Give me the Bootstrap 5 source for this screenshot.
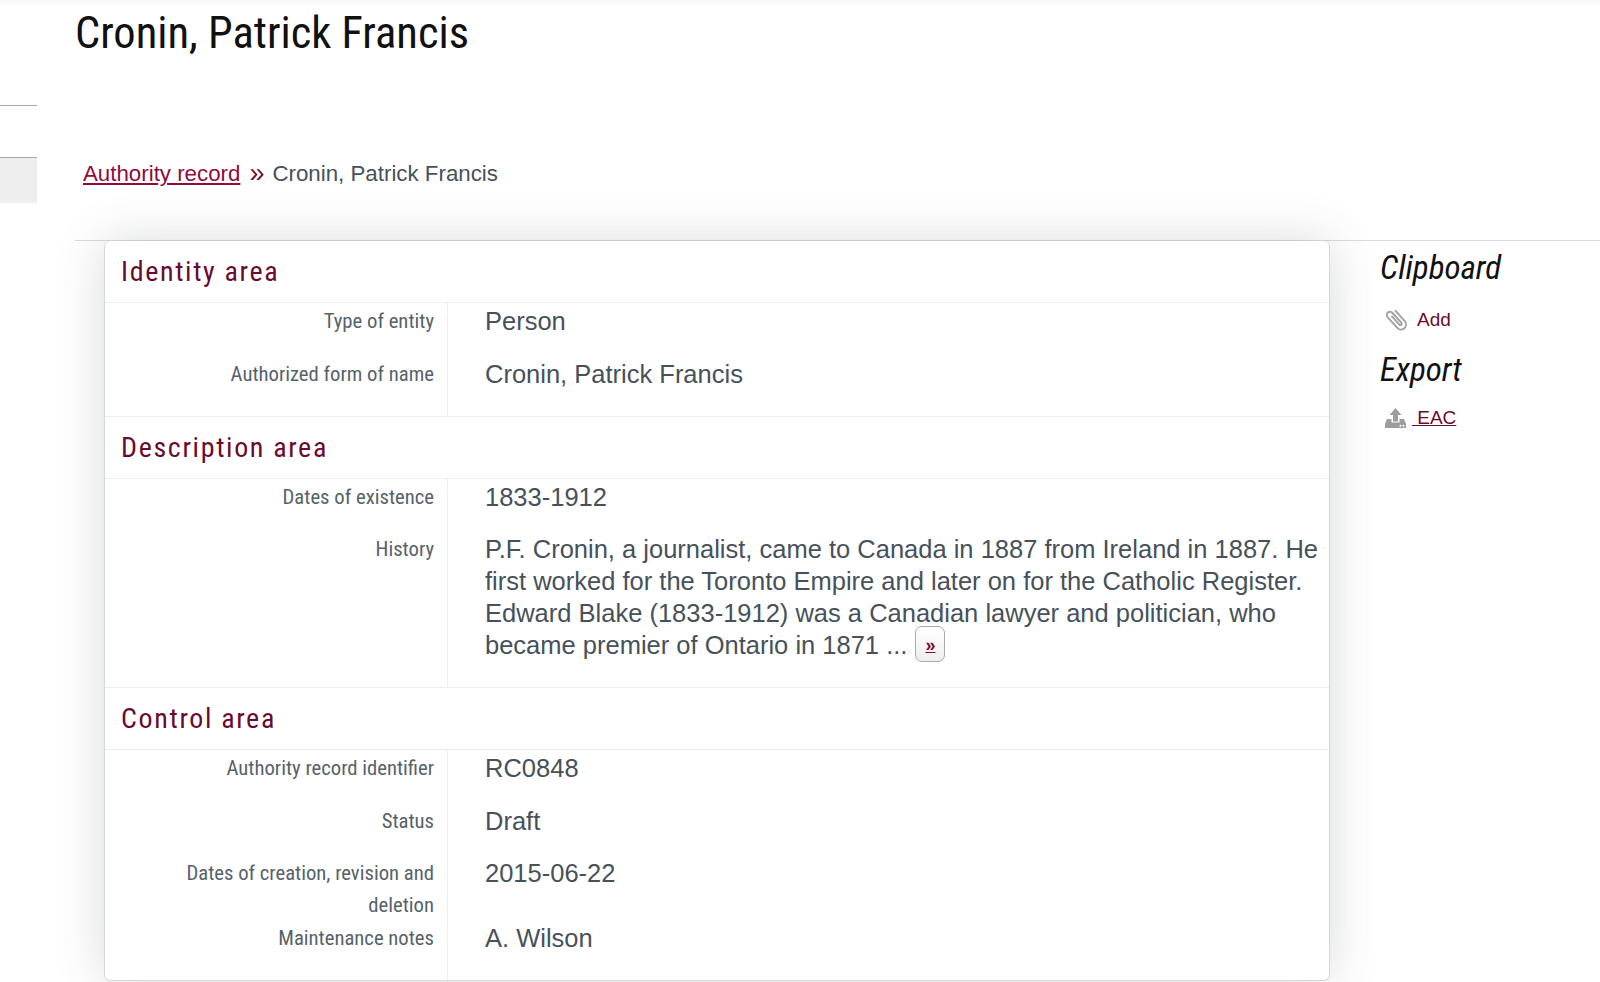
<!DOCTYPE html>
<html lang="en">
<head>
    <meta charset="UTF-8">
    <title>Cronin, Patrick Francis</title>
    <link href="https://cdn.jsdelivr.net/npm/bootstrap@5.3.0/dist/css/bootstrap.min.css" rel="stylesheet">
    <style>
        body {
            margin: 0;
            height: 982px;
            overflow: hidden;
            background: #fff;
            font-family: "Liberation Sans", Arial, sans-serif;
            color: #47515a;
        }

        .cond {
            font-family: "Liberation Sans Narrow", "Roboto", sans-serif;
            font-stretch: 75%;
        }

        .top-shade {
            height: 8px;
            margin-bottom: -8px;
            background: linear-gradient(#f7f7f7, #fff);
        }

        .side-stub { width: 37px; margin-right: 38px; flex: none; }
        .stub-line { height: 1px; background: #a9a9a9; margin-top: 105px; }
        .stub-block { height: 46px; margin-top: 51px; background: #eee; border-top: 1px solid #a9a9a9; }

        .main-wrap { flex: 1; min-width: 0; }

        .page-title {
            font-size: 44.5px;
            line-height: 48px;
            font-weight: 400;
            color: #111;
            margin: 9px 0 0;
        }

        .crumbs {
            margin: 101px 0 0 8px;
            font-size: 22.3px;
            line-height: 32px;
            height: 82px;
        }
        .crumbs a { color: #8f0b3b; }
        .crumb-sep { color: #6f0f33; margin: 0 8px 0 9px; font-size: 27px; line-height: 30px; }

        .body-row { border-top: 1px solid #d8dadc; }

        .record-box {
            width: 1226px;
            margin-left: 29px;
            height: 740px;
            flex: none;
            border: 1px solid #d5d7d9;
            border-top: 0;
            border-radius: 6px;
            box-shadow: 0 0 50px rgba(60, 70, 75, .2);
            background: #fff;
        }

        .area-head {
            height: 62px;
            margin: 0;
            padding: 1px 16px 0;
            display: flex;
            align-items: center;
            font-size: 28px;
            font-weight: 400;
            letter-spacing: 1.65px;
            color: #6b0a30;
            border-bottom: 1px solid #eceeef;
        }

        .field { display: flex; }
        .area-head + .field > div { padding-top: 2px; }
        .field-label {
            width: 342px;
            flex: none;
            padding: 0 13px 1px 70px;
            text-align: right;
            font-size: 20.7px;
            line-height: 32px;
            color: #56626a;
        }
        .field-value {
            flex: 1;
            border-left: 1px solid #eceeef;
            padding: 0 10px 20.6px 37px;
            font-size: 25.5px;
            line-height: 32px;
        }
        .field:last-child .field-value { padding-bottom: 26px; }
        .area-block { border-bottom: 1px solid #eceeef; }
        .area-block:last-child { border-bottom: 0; }

        .more-btn {
            display: inline-block;
            width: 30px;
            height: 36px;
            margin: -3px 0 -5px 1px;
            border: 1px solid #aaa;
            border-radius: 7px;
            background: linear-gradient(#fff, #eee);
            font-size: 18px;
            line-height: 36px;
            text-align: center;
            vertical-align: top;
            color: #7a0b33;
            font-weight: 700;
        }

        .side-col { padding-left: 50px; }
        .side-head {
            font-size: 33px;
            line-height: 40px;
            font-style: italic;
            font-weight: 400;
            color: #111;
            margin: 7px 0 0;
        }
        .side-link {
            display: flex;
            align-items: center;
            font-size: 19px;
            line-height: 30px;
            padding-left: 5px;
            color: #6b0a30;
        }
        .side-link a { color: #6b0a30; margin-left: 6px; }
        .clip-row { margin-top: 17px; }
        .export-head { margin-top: 15px; }
        .export-row { margin-top: 13px; }
    </style>
</head>
<body>
    <div class="top-shade"></div>
    <div class="d-flex">
        <div class="side-stub">
            <div class="stub-line"></div>
            <div class="stub-block"></div>
        </div>
        <div class="main-wrap">
            <h1 class="page-title cond">Cronin, Patrick Francis</h1>
            <div class="crumbs d-flex align-items-start">
                <a href="#">Authority record</a><span class="crumb-sep">»</span><span>Cronin, Patrick Francis</span>
            </div>
            <div class="body-row d-flex">
                <div class="record-box">
                    <section class="area-block">
                        <h2 class="area-head cond">Identity area</h2>
                        <div class="field"><div class="field-label cond">Type of entity</div><div class="field-value">Person</div></div>
                        <div class="field"><div class="field-label cond">Authorized form of name</div><div class="field-value">Cronin, Patrick Francis</div></div>
                    </section>
                    <section class="area-block">
                        <h2 class="area-head cond">Description area</h2>
                        <div class="field"><div class="field-label cond">Dates of existence</div><div class="field-value">1833-1912</div></div>
                        <div class="field"><div class="field-label cond">History</div><div class="field-value">P.F. Cronin, a journalist, came to Canada in 1887 from Ireland in 1887. He first worked for the Toronto Empire and later on for the Catholic Register. Edward Blake (1833-1912) was a Canadian lawyer and politician, who became premier of Ontario in 1871 ... <a href="#" class="more-btn">»</a></div></div>
                    </section>
                    <section class="area-block">
                        <h2 class="area-head cond">Control area</h2>
                        <div class="field"><div class="field-label cond">Authority record identifier</div><div class="field-value">RC0848</div></div>
                        <div class="field"><div class="field-label cond">Status</div><div class="field-value">Draft</div></div>
                        <div class="field"><div class="field-label cond">Dates of creation, revision and deletion</div><div class="field-value">2015-06-22</div></div>
                        <div class="field"><div class="field-label cond">Maintenance notes</div><div class="field-value">A. Wilson</div></div>
                    </section>
                </div>
                <div class="side-col">
                    <h3 class="side-head cond">Clipboard</h3>
                    <div class="side-link clip-row">
                        <svg class="me-2" width="24" height="24" viewBox="0 0 24 24" fill="none" stroke="#a2a2a2" stroke-width="1.900" stroke-linecap="round"><path transform="rotate(-42 12 12)" d="M17 4v14a5 5 0 0 1-10 0V3.500a3.200 3.200 0 0 1 6.400 0V17a1.400 1.400 0 0 1-2.800 0V6"/></svg>
                        <span>Add</span>
                    </div>
                    <h3 class="side-head cond export-head">Export</h3>
                    <div class="side-link export-row">
                        <svg width="21" height="22" viewBox="0 0 21 22" fill="#9d9d9d"><path d="M10.500 1 4.500 8H8v6.500h5V8h3.500z"/><path d="M0 17l2-5h4.500v3.500h8V12H19l2 5v4H0z"/><circle cx="15.500" cy="18.800" r="1" fill="#fff"/><circle cx="18.500" cy="18.800" r="1" fill="#fff"/></svg>
                        <a href="#">&nbsp;EAC</a>
                    </div>
                </div>
            </div>
        </div>
    </div>
    <script src="https://cdn.jsdelivr.net/npm/bootstrap@5.3.0/dist/js/bootstrap.bundle.min.js"></script>
</body>
</html>
